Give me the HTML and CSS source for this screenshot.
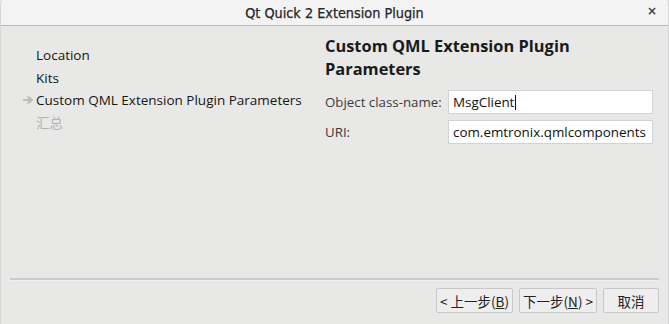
FILE: index.html
```html
<!DOCTYPE html>
<html>
<head>
<meta charset="utf-8">
<link rel="stylesheet" href="styles.css">
</head>
<body>
<div class="window">
  <div class="titlebar">
    <span class="title">Qt Quick 2 Extension Plugin</span>
    <span class="close">×</span>
  </div>
  <div class="content">
    <ul class="steps">
      <li class="step">Location</li>
      <li class="step">Kits</li>
      <li class="step current"><svg class="arrow" width="12" height="10" viewBox="0 0 12 10"><path d="M1 5H8M5 1.5L8.5 5L5 8.5M7 1.5L10.5 5L7 8.5" fill="none" stroke="#9a9a9a" stroke-width="1"/></svg>Custom QML Extension Plugin Parameters</li>
      <li class="step disabled">汇总</li>
    </ul>
    <div class="page">
      <h1 class="heading">Custom QML Extension Plugin Parameters</h1>
      <div class="form">
        <label class="label">Object class-name:</label>
        <div class="input">MsgClient<span class="caret"></span></div>
        <label class="label">URI:</label>
        <div class="input">com.emtronix.qmlcomponents</div>
      </div>
    </div>
  </div>
  <div class="separator"></div>
  <div class="buttons">
    <button class="btn back">&lt; 上一步(<u>B</u>)</button>
    <button class="btn next">下一步(<u>N</u>) &gt;</button>
    <button class="btn cancel">取消</button>
  </div>
</div>
</body>
</html>
```
FILE: styles.css
```css
* { box-sizing: border-box; }
html, body { margin: 0; padding: 0; }
body {
  width: 669px;
  height: 324px;
  overflow: hidden;
  background: #e8e8e7;
  font-family: "Open Sans", "Noto Sans", "Noto Sans CJK SC", sans-serif;
  font-size: 13px;
  color: #1e1e1e;
}
.window {
  width: 669px;
  height: 324px;
  display: flex;
  flex-direction: column;
  background: #e8e8e7;
  border-left: 1px solid #d6d6d6;
  border-right: 1px solid #d6d6d6;
  border-radius: 4px 4px 0 0;
  overflow: hidden;
}
.titlebar {
  height: 26px;
  flex: none;
  display: flex;
  align-items: center;
  justify-content: center;
  position: relative;
  background: #f3f3f3;
  border-bottom: 1px solid #b9b9b9;
}
.title {
  font-family: "DejaVu Sans Condensed", "DejaVu Sans", sans-serif;
  font-size: 14.3px;
  font-weight: 500;
  color: #262626;
  -webkit-text-stroke: 0.25px #262626;
}
.close {
  position: absolute;
  right: 11px;
  top: 4px;
  font-family: "DejaVu Sans", sans-serif;
  font-size: 12px;
  font-weight: bold;
  color: #444;
}
.content {
  flex: 1;
  display: flex;
}
.steps {
  list-style: none;
  margin: 0;
  padding: 18px 0 0 0;
  width: 324px;
  flex: none;
}
.step {
  height: 22.5px;
  line-height: 22px;
  padding-left: 35px;
  position: relative;
  font-size: 13.5px;
  color: #161616;
}
.arrow {
  position: absolute;
  left: 21px;
  top: 6px;
}
.step.disabled { color: #b3b3b3; }
.page {
  flex: 1;
  padding-top: 8px;
}
.heading {
  margin: 0;
  font-size: 16.4px;
  font-weight: bold;
  line-height: 23px;
  color: #1a1a1a;
  width: 300px;
}
.form {
  display: grid;
  grid-template-columns: 123px 205px;
  row-gap: 6px;
  margin-top: 10px;
  align-items: center;
}
.label {
  color: #3b3b3b;
  font-size: 13.3px;
}
.input {
  height: 24px;
  background: #fff;
  border: 1px solid #d3d3d3;
  padding-left: 4px;
  line-height: 22px;
  font-size: 13.4px;
  color: #111;
  display: flex;
  align-items: center;
}
.caret {
  display: inline-block;
  width: 1px;
  height: 15px;
  background: #111;
  margin-left: 1px;
}
.separator {
  flex: none;
  height: 2px;
  margin: 0 9px 0 9px;
  background: #cbcbcb;
  border-bottom: 1px solid #f0f0f0;
  box-sizing: content-box;
}
.buttons {
  flex: none;
  height: 43px;
  display: flex;
  justify-content: flex-end;
  align-items: flex-start;
  padding: 7px 9px 0 0;
  gap: 6px;
}
.btn {
  height: 25px;
  border: 1px solid #c8c8c8;
  border-radius: 2px;
  background: #eeeeee;
  font-family: "Noto Sans CJK SC", "Noto Sans", sans-serif;
  font-size: 13.5px;
  color: #222;
  padding: 0;
  line-height: 22px;
}
.btn u { text-decoration: underline; text-underline-offset: 1px; }
.back { width: 77px; }
.next { width: 78px; }
.cancel { width: 56px; }
```
